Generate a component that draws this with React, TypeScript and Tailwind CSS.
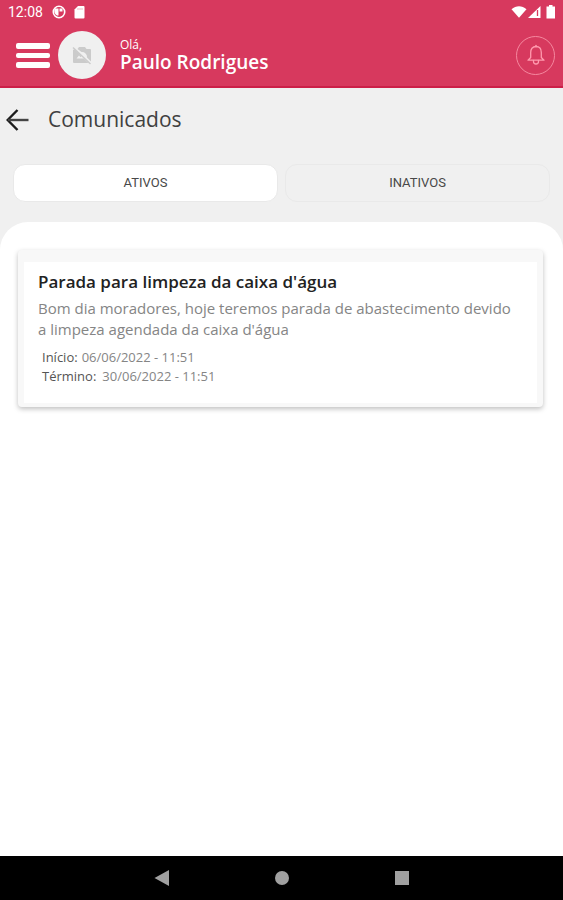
import { useState } from "react";

function StatusBar() {
  return (
    <div className="flex h-6 items-center justify-between pl-2 pr-1 font-[Roboto,sans-serif] text-sm text-white">
      <div className="flex items-center">
        <span className="w-11">12:08</span>
        <svg className="size-4" viewBox="0 0 16 16" aria-hidden="true">
          <circle cx="7" cy="8" r="5.700" fill="none" stroke="#fff" strokeWidth="1.600" />
          <path d="M3 4.500h3.500v7H5A5 5 0 0 1 3 4.500zM7.500 4.500h3v3h-3z" fill="#fff" />
        </svg>
        <svg className="ml-1 size-4" viewBox="0 0 16 16" aria-hidden="true">
          <path d="M6 2h5.500a1 1 0 0 1 1 1v10.500a1 1 0 0 1-1 1h-8a1 1 0 0 1-1-1V5.500z" fill="#fff" />
          <path d="M6 4v2M8 4v2M10 4v2" stroke="#eda3b4" strokeWidth="0.800" />
        </svg>
      </div>
      <div className="flex items-center">
        <svg className="size-4" viewBox="0 0 16 16" aria-hidden="true">
          <path d="M.5 5.300C5 1.300 11 1.300 15.500 5.300L8 13.700z" fill="#fff" />
        </svg>
        <svg className="size-4" viewBox="0 0 16 16" aria-hidden="true">
          <path d="M13.500 2v12H1z" fill="#fff" />
          <path d="M10.500 6v6" stroke="#d7395e" strokeWidth="1.300" />
        </svg>
        <svg className="size-4" viewBox="0 0 16 16" aria-hidden="true">
          <path d="M6 1h3.500v1.500H12v12H3.500v-12H6z" fill="#fff" />
        </svg>
      </div>
    </div>
  );
}

function Header() {
  return (
    <header className="border-b-2 border-[#cc1f48] bg-[#d7395e]">
      <StatusBar />
      <div className="flex h-[62px] items-center pl-4 pr-2">
        <button type="button" aria-label="Menu" className="flex w-[34px] flex-col gap-1">
          <span className="h-[6px] rounded-xs bg-white" />
          <span className="h-[5px] rounded-xs bg-white" />
          <span className="h-[6px] rounded-xs bg-white" />
        </button>
        <div className="ml-2 flex size-12 items-center justify-center rounded-full bg-[#f0f0f0]">
          <svg className="size-6" viewBox="0 0 24 24" aria-hidden="true">
            <path
              d="M3 7v12a1 1 0 0 0 1 1h14.500l-4.700-4.500H6.500l2.500-3 1.500 1.800L11.500 13 4.500 6zM7.500 6 9 4h6l1.500 2H20a1 1 0 0 1 1 1v11.500L17 14.500a5 5 0 0 0-5.500-5.500z"
              fill="#cbcbcb"
            />
            <path d="M3 4.500 20.500 21" stroke="#cbcbcb" strokeWidth="1.400" />
          </svg>
        </div>
        <div className="ml-[14px] flex-1 text-white">
          <p className="text-xs leading-[14px]">Olá,</p>
          <p className="text-[19px] font-semibold leading-5">Paulo Rodrigues</p>
        </div>
        <button
          type="button"
          aria-label="Notificações"
          className="flex size-[39px] items-center justify-center rounded-full border border-[#f5889f] text-[#ff9aae]"
        >
          <svg
            className="size-6"
            viewBox="0 0 24 24"
            fill="none"
            stroke="currentColor"
            strokeWidth="1.300"
            strokeLinejoin="round"
            strokeLinecap="round"
            aria-hidden="true"
          >
            <path d="M12 2.500v1M12 3.500c-3.700 0-5.300 2.700-5.300 6v5L4 17.200h16l-2.700-2.700v-5c0-3.300-1.600-6-5.300-6z" />
            <path d="M9.500 17.500v1a2.500 2.500 0 0 0 5 0v-1" />
          </svg>
        </button>
      </div>
    </header>
  );
}

function Tabs() {
  const [active, setActive] = useState("ATIVOS");
  return (
    <div role="tablist" className="mx-[13px] mt-4 flex gap-[7px]">
      {["ATIVOS", "INATIVOS"].map((name) => (
        <button
          key={name}
          type="button"
          role="tab"
          aria-selected={active === name}
          onClick={() => setActive(name)}
          className={
            "h-[38px] flex-1 rounded-xl border border-[#e9e9e9] font-[Roboto,sans-serif] text-[13px] text-[#484848] " +
            (active === name ? "bg-white" : "bg-[#f0f0f0]")
          }
        >
          {name}
        </button>
      ))}
    </div>
  );
}

function Notice() {
  return (
    <article className="rounded-sm border-x-[6px] border-b-4 border-t-[12px] border-[#f8f8f8] bg-white px-[14px] pb-[17px] pt-2 shadow-[0_2px_5px_rgba(0,0,0,0.25)]">
      <h2 className="text-[17px] font-semibold leading-6 text-[#222]">Parada para limpeza da caixa d'água</h2>
      <p className="mt-1 text-[15px] leading-[21px] text-[#858585]">
        Bom dia moradores, hoje teremos parada de abastecimento devido a limpeza agendada da caixa d'água
      </p>
      <dl className="ml-1 mt-2 text-[13px] leading-[19px]">
        <div className="flex gap-1">
          <dt className="text-[#555]">Início:</dt>
          <dd className="text-[#858585]">06/06/2022 - 11:51</dd>
        </div>
        <div className="flex gap-[6px]">
          <dt className="text-[#555]">Término:</dt>
          <dd className="text-[#858585]">30/06/2022 - 11:51</dd>
        </div>
      </dl>
    </article>
  );
}

function NavigationBar() {
  return (
    <nav className="flex h-11 items-center justify-center gap-24 bg-black text-[#a0a0a0]">
      <button type="button" aria-label="Voltar" className="size-6">
        <svg viewBox="0 0 24 24" fill="currentColor">
          <path d="M19 4v16L4.500 12z" />
        </svg>
      </button>
      <button type="button" aria-label="Início" className="size-6">
        <svg viewBox="0 0 24 24" fill="currentColor">
          <circle cx="12" cy="12" r="7" />
        </svg>
      </button>
      <button type="button" aria-label="Recentes" className="size-6">
        <svg viewBox="0 0 24 24" fill="currentColor">
          <path d="M5 5h14v14H5z" />
        </svg>
      </button>
    </nav>
  );
}

export default function App() {
  return (
    <div className="flex min-h-screen flex-col bg-[#f0f0f0] font-['Open_Sans',sans-serif]">
      <Header />
      <div className="flex h-[60px] items-center pl-[6px] pt-1">
        <button type="button" aria-label="Voltar" className="size-6">
          <svg viewBox="0 0 24 24" fill="none" stroke="#1c1c1c" strokeWidth="2.400" aria-hidden="true">
            <path d="M11.500 2 1.700 12l9.800 10" />
            <path d="M2 12h20.500" stroke="#444" />
          </svg>
        </button>
        <h1 className="ml-[18px] pb-[2px] text-[21px] leading-7 text-[#404040]">Comunicados</h1>
      </div>
      <Tabs />
      <main className="mt-5 flex-1 rounded-t-[28px] bg-white pl-[18px] pr-5 pt-7">
        <Notice />
      </main>
      <NavigationBar />
    </div>
  );
}
